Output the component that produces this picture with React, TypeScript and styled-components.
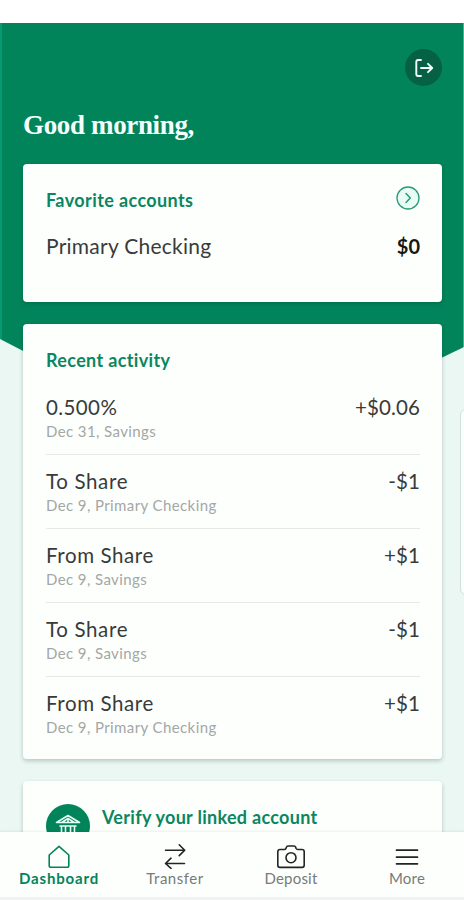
import React from "react";
import styled, { createGlobalStyle } from "styled-components";

const green = "#02845b";

const GlobalStyle = createGlobalStyle`
  * { box-sizing: border-box; }
  body { margin: 0; background: #fff; }
`;

const Screen = styled.div`
  position: relative;
  display: flex;
  flex-direction: column;
  width: 464px;
  height: 900px;
  overflow: hidden;
  background: #f0f3f1;
  font-family: Lato, "Open Sans", sans-serif;
  color: #383b39;
`;

const StatusBar = styled.div`
  flex: 0 0 23px;
  background: #fff;
`;

const Scroll = styled.main`
  flex: 0 0 809px;
  display: grid;
  grid-template-columns: 464px;
  grid-template-rows: 809px;
  overflow: hidden;
  background: #eaf7f3;
`;

const Backdrop = styled.div`
  grid-area: 1 / 1;
  height: 440px;
  background: linear-gradient(90deg, #079875 0 2px, ${green} 2px 463px, #4fae90 463px);
  clip-path: polygon(0 0, 100% 0, 100% 324px, 232px 436px, 0 316px);
`;

const Content = styled.div`
  grid-area: 1 / 1;
  z-index: 1;
  display: flex;
  flex-direction: column;
  padding: 26px 22px 0 23px;
`;

const LogoutButton = styled.button`
  flex: 0 0 37px;
  align-self: flex-end;
  display: grid;
  place-items: center;
  width: 37px;
  padding: 0;
  border: 0;
  border-radius: 50%;
  background: #056044;
`;

const Greeting = styled.h1`
  flex: 0 0 56px;
  margin: 22px 0 0;
  font: bold 27px/34px "Liberation Serif", serif;
  letter-spacing: -0.35px;
  color: #f4fffb;
`;

const Card = styled.section<{ $height: number }>`
  flex: 0 0 ${(p) => p.$height}px;
  margin-bottom: 22px;
  padding: 23px 22px 0 23px;
  border-radius: 4px;
  background: #fdfffd;
  box-shadow: 0 2px 4px rgba(0, 50, 35, 0.24);
`;

const CardHeader = styled.header`
  display: flex;
  justify-content: space-between;
  height: 26px;
  svg { margin-top: -1px; }
`;

const CardTitle = styled.h2<{ $spacing?: number }>`
  margin: 0;
  font-size: 18px;
  line-height: 27px;
  font-weight: 700;
  letter-spacing: ${(p) => p.$spacing ?? 0}px;
  white-space: nowrap;
  color: #0b8660;
`;

const AccountRow = styled.div`
  display: flex;
  justify-content: space-between;
  margin-top: 18px;
  font-size: 21px;
  line-height: 30px;
`;

const Name = styled.span<{ $spacing: number }>`
  letter-spacing: ${(p) => p.$spacing}px;
  white-space: nowrap;
`;

const Balance = styled.strong`
  font-size: 20px;
  font-weight: 700;
  color: #151816;
`;

const Activity = styled.ul`
  list-style: none;
  margin: 8px 0 0;
  padding: 0;
`;

const ActivityItem = styled.li`
  height: 74px;
  padding-top: 12px;
  border-bottom: 1px solid #e5e9e7;
  &:last-child { border-bottom: 0; }
`;

const ActivityLine = styled.div`
  display: flex;
  justify-content: space-between;
  font-size: 20.5px;
  line-height: 28px;
`;

const Meta = styled.div`
  font-size: 15px;
  line-height: 21px;
  letter-spacing: 0.4px;
  color: #a3a7a5;
`;

const VerifyRow = styled.div`
  display: flex;
  gap: 12px;
`;

const BankBadge = styled.div`
  display: grid;
  place-items: center;
  width: 44px;
  height: 44px;
  border-radius: 50%;
  background: ${green};
`;

const Nav = styled.nav`
  flex: 0 0 65px;
  z-index: 2;
  display: grid;
  grid-template-columns: repeat(4, 116px);
  padding-left: 1px;
  background: #fdfffd;
  box-shadow: 0 -1px 2px rgba(0, 60, 40, 0.08);
`;

const NavItem = styled.a<{ $active?: boolean; $spacing: number }>`
  display: flex;
  flex-direction: column;
  align-items: center;
  padding-top: 11px;
  font-size: 15px;
  line-height: 18px;
  font-weight: ${(p) => (p.$active ? 700 : 400)};
  letter-spacing: ${(p) => p.$spacing}px;
  color: ${(p) => (p.$active ? green : "#777b79")};
  svg { color: ${(p) => (p.$active ? green : "#222523")}; }
`;

const SideHandle = styled.div`
  position: absolute;
  z-index: 1;
  right: -8px;
  top: 409px;
  width: 12px;
  height: 186px;
  border: 1px solid #d3dfda;
  border-radius: 7px;
  background: #f9fffc;
`;

const activity = [
  { name: "0.500%", spacing: 0.4, meta: "Dec 31, Savings", amount: "+$0.06" },
  { name: "To Share", spacing: 0.65, meta: "Dec 9, Primary Checking", amount: "-$1" },
  { name: "From Share", spacing: 0.6, meta: "Dec 9, Savings", amount: "+$1" },
  { name: "To Share", spacing: 0.65, meta: "Dec 9, Savings", amount: "-$1" },
  { name: "From Share", spacing: 0.6, meta: "Dec 9, Primary Checking", amount: "+$1" },
];

const stroke = {
  fill: "none",
  stroke: "currentColor",
  strokeLinecap: "round" as const,
  strokeLinejoin: "round" as const,
};

const LogoutIcon = () => (
  <svg width="20" height="20" viewBox="0 0 20 20" {...stroke} stroke="#f1fff9" strokeWidth="1.9">
    <path d="M7 2H4.2Q2.3 2 2.3 4V16Q2.3 18 4.2 18H7" />
    <path d="M7 10H18M14 5.8 18.2 10 14 14.2" />
  </svg>
);

const ArrowCircleIcon = () => (
  <svg width="24" height="24" viewBox="0 0 24 24" {...stroke} stroke="#2a9b79">
    <circle cx="12" cy="12" r="11" fill="#e9fbf5" strokeWidth="1.3" />
    <path d="M10 7.5 14.3 12 10 16.5" strokeWidth="1.5" />
  </svg>
);

const BankIcon = () => (
  <svg width="28" height="28" viewBox="0 0 28 28" {...stroke} stroke="#e6fff5" strokeWidth="1.6">
    <path d="M2.5 10.5 14 3.5 25.5 10.5Z M8.5 10 14 6.3 19.5 10" />
    <path d="M14 7.5V10" />
    <path d="M6 14H22M7.5 14V21M11.5 14V21M16.5 14V21M20.5 14V21M4 22H24M2 25H26" />
  </svg>
);

const HomeIcon = () => (
  <svg width="30" height="26" viewBox="0 0 30 26" {...stroke} strokeWidth="1.6">
    <path d="M15 3.3 24.8 12V22.5Q24.8 24.3 23 24.3H7Q5.2 24.3 5.2 22.5V12Z" />
  </svg>
);

const TransferIcon = () => (
  <svg width="30" height="26" viewBox="0 0 30 26" {...stroke} strokeWidth="1.6">
    <path d="M5.5 7.2H24.5M19.2 1.8 24.7 7.2 19.2 12.6" />
    <path d="M24.5 20.5H5.8M11 15.2 5.5 20.5 11 25.4" />
  </svg>
);

const CameraIcon = () => (
  <svg width="30" height="26" viewBox="0 0 30 26" {...stroke} strokeWidth="1.6">
    <path d="M4 6.5H8.2Q9.6 6.5 10 5.2L10.5 4Q10.8 3 12 3H18Q19.2 3 19.6 4L20 5.2Q20.5 6.5 21.8 6.5H26Q28.2 6.5 28.2 8.7V22Q28.2 24.4 26 24.4H4Q1.8 24.4 1.8 22V8.7Q1.8 6.5 4 6.5Z" />
    <circle cx="15" cy="14.7" r="5" />
  </svg>
);

const MenuIcon = () => (
  <svg width="30" height="26" viewBox="0 0 30 26" {...stroke} strokeWidth="1.7">
    <path d="M4.5 7.2H25.5M4.5 14.2H25.5M4.5 20.8H25.5" />
  </svg>
);

export default function App() {
  return (
    <Screen>
      <GlobalStyle />
      <StatusBar />
      <Scroll>
        <Backdrop />
        <Content>
          <LogoutButton aria-label="Log out"><LogoutIcon /></LogoutButton>
          <Greeting>Good morning,</Greeting>
          <Card $height={138}>
            <CardHeader>
              <CardTitle $spacing={0.4}>Favorite accounts</CardTitle>
              <ArrowCircleIcon />
            </CardHeader>
            <AccountRow>
              <Name $spacing={0.25}>Primary Checking</Name>
              <Balance>$0</Balance>
            </AccountRow>
          </Card>
          <Card $height={435}>
            <CardHeader>
              <CardTitle $spacing={0.35}>Recent activity</CardTitle>
            </CardHeader>
            <Activity>
              {activity.map((a, i) => (
                <ActivityItem key={i}>
                  <ActivityLine>
                    <Name $spacing={a.spacing}>{a.name}</Name>
                    <Name $spacing={0.1}>{a.amount}</Name>
                  </ActivityLine>
                  <Meta>{a.meta}</Meta>
                </ActivityItem>
              ))}
            </Activity>
          </Card>
          <Card $height={110}>
            <VerifyRow>
              <BankBadge><BankIcon /></BankBadge>
              <CardTitle $spacing={0.3}>Verify your linked account</CardTitle>
            </VerifyRow>
          </Card>
        </Content>
      </Scroll>
      <SideHandle />
      <Nav>
        <NavItem $active $spacing={0.85}><HomeIcon />Dashboard</NavItem>
        <NavItem $spacing={0.5}><TransferIcon />Transfer</NavItem>
        <NavItem $spacing={0.2}><CameraIcon />Deposit</NavItem>
        <NavItem $spacing={0.2}><MenuIcon />More</NavItem>
      </Nav>
    </Screen>
  );
}
